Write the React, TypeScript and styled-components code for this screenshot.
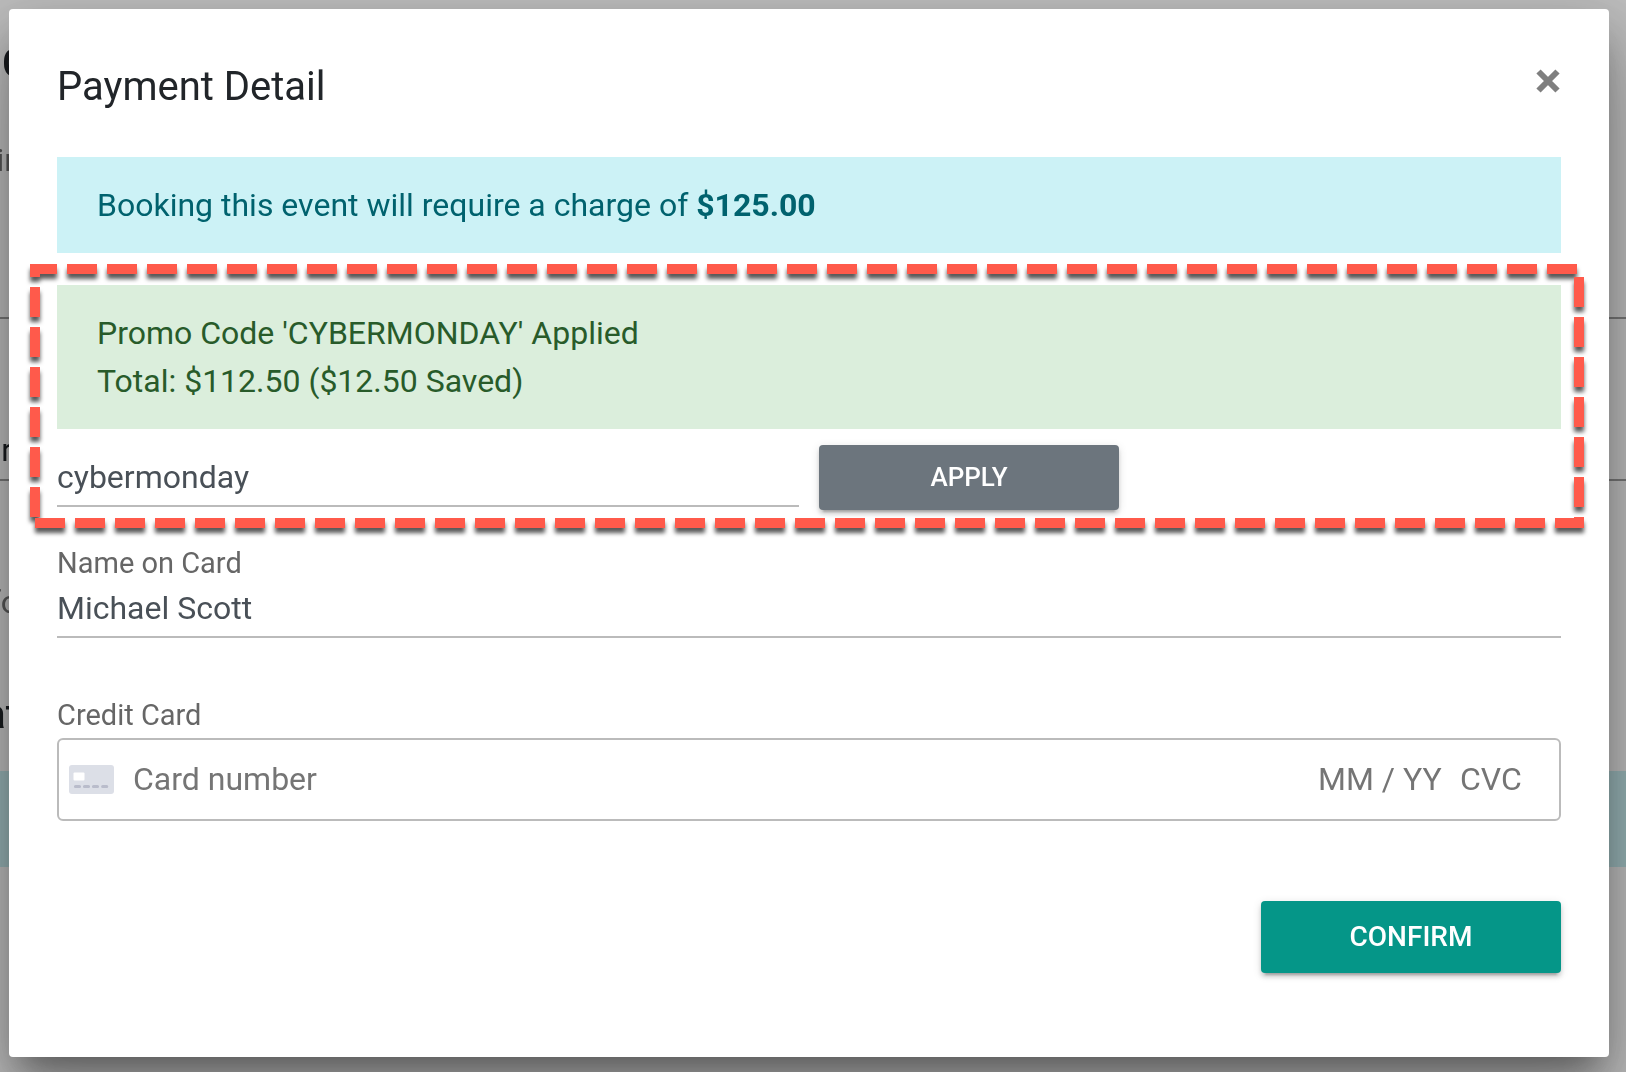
import React from "react";
import styled, { createGlobalStyle } from "styled-components";

const GlobalStyle = createGlobalStyle`
  *, *::before, *::after { box-sizing: border-box; }
  html, body, #root { height: 100%; }
  body {
    margin: 0;
    background: #fff;
    color: #212529;
    font-family: Roboto, "Liberation Sans", sans-serif;
    font-size: 32px;
    line-height: 48px;
  }
  button, input { font: inherit; margin: 0; }
`;

const Screen = styled.div`
  position: relative;
  min-height: 100%;
  overflow: hidden;
`;

const Page = styled.div`
  position: absolute;
  inset: 0;
  padding-top: 40px;
  overflow: hidden;
  will-change: transform;
`;

/* Lines of the page run up to just inside the dialog's left edge. */
const PageLine = styled.div<{ $end: number; $top: number; $tone?: string; $size?: number }>`
  width: ${(p) => p.$end}px;
  margin-top: ${(p) => p.$top}px;
  display: flex;
  justify-content: flex-end;
  white-space: nowrap;
  color: ${(p) => p.$tone ?? "#212529"};
  font-size: ${(p) => p.$size ?? 32}px;
  font-weight: ${(p) => (p.$size ? 500 : 400)};
`;

const PageRule = styled.hr<{ $top: number }>`
  margin: ${(p) => p.$top}px 0 0;
  border: 0;
  height: 2px;
  background: #a0a0a0;
`;

const PageBand = styled.div`
  height: 96px;
  margin-top: 32px;
  background: #ccf2f5;
`;

const Backdrop = styled.div`
  position: absolute;
  inset: 0;
  background: rgba(0, 0, 0, 0.26);
`;

const Dialog = styled.section`
  position: relative;
  margin: 9px 17px 15px 9px;
  padding: 48px 48px 84px;
  background: #fff;
  border-radius: 4px;
  box-shadow: 0 22px 30px -14px rgba(0, 0, 0, 0.34), 0 48px 76px 6px rgba(0, 0, 0, 0.2),
    0 18px 60px 12px rgba(0, 0, 0, 0.16);
`;

const Header = styled.header`
  display: flex;
  justify-content: space-between;
  align-items: flex-start;
  margin-bottom: 40px;
`;

const Title = styled.h1`
  margin: 0;
  font-size: 40px;
  line-height: 60px;
  font-weight: 400;
`;

const CloseButton = styled.button`
  display: flex;
  padding: 12px 1px;
  border: 0;
  background: none;
  cursor: pointer;
`;

const Alert = styled.div<{ $tone: "info" | "success" }>`
  padding: 24px 40px;
  background: ${(p) => (p.$tone === "info" ? "#ccf2f6" : "#dbeedc")};
  color: ${(p) => (p.$tone === "info" ? "#00626e" : "#285b2a")};
  p { margin: 0; }
  strong { font-weight: 700; }
`;

const Promo = styled.section`
  position: relative;
  margin-top: 32px;
`;

/* Dashed call-out; the flip starts the dashes at the bottom left corner. */
const Highlight = styled.div`
  position: absolute;
  inset: -21px -23px -18px -27px;
  pointer-events: none;
  filter: drop-shadow(0 5px 2px rgba(0, 0, 0, 0.65));
  svg {
    display: block;
    width: 100%;
    height: 100%;
    transform: scaleY(-1);
  }
  rect {
    width: calc(100% - 10px);
    height: calc(100% - 10px);
  }
`;

const PromoRow = styled.div`
  display: grid;
  grid-template-columns: minmax(0, 742fr) 300px minmax(0, 422fr);
  column-gap: 20px;
  align-items: start;
  margin-top: 16px;
`;

const LineInput = styled.input`
  display: block;
  width: 100%;
  padding: 0;
  border: 0;
  border-bottom: 2px solid #bbb;
  border-radius: 0;
  outline: 0;
  background: transparent;
  color: #495057;
`;

const PromoInput = styled(LineInput)`
  height: 62px;
  padding-top: 4px;
`;

const NameInput = styled(LineInput)`
  height: 54px;
  padding-bottom: 4px;
`;

const Button = styled.button<{ $fill: string; $size: number; $height: number }>`
  width: 300px;
  height: ${(p) => p.$height}px;
  padding: 0 0 1px;
  border: 0;
  border-radius: 4px;
  background: ${(p) => p.$fill};
  color: #fff;
  font-size: ${(p) => p.$size}px;
  font-weight: 500;
  text-transform: uppercase;
  cursor: pointer;
  box-shadow: 0 4px 4px rgba(0, 0, 0, 0.14), 0 6px 2px -4px rgba(0, 0, 0, 0.2), 0 2px 10px rgba(0, 0, 0, 0.12);
`;

const Field = styled.div<{ $top: number }>`
  margin-top: ${(p) => p.$top}px;
`;

const Label = styled.label`
  display: block;
  font-size: 29px;
  line-height: 42px;
  color: #666;
`;

const CardBox = styled.div`
  display: flex;
  align-items: center;
  height: 83px;
  margin-top: 2px;
  padding: 0 36px 1px 10px;
  border: 2px solid #bbb;
  border-radius: 6px;
`;

const CardInput = styled.input<{ $width?: number }>`
  flex: ${(p) => (p.$width ? "none" : "1 1 0")};
  width: ${(p) => (p.$width ? p.$width + "px" : "auto")};
  min-width: 0;
  padding: 0 0 1px;
  border: 0;
  outline: 0;
  background: transparent;
  color: #495057;
  &::placeholder { color: #757575; opacity: 1; }
`;

const CardIcon = styled.svg`
  flex: none;
  margin-right: 19px;
`;

const Footer = styled.footer`
  display: flex;
  justify-content: flex-end;
  margin-top: 80px;
`;

export default function App() {
  return (
    <>
      <GlobalStyle />
      <Screen>
        <Page aria-hidden="true">
          <PageLine $end={28} $top={0} $size={40}>C</PageLine>
          <PageLine $end={22} $top={48} $tone="#757575">in</PageLine>
          <PageRule $top={133} />
          <PageLine $end={12} $top={107}>r</PageLine>
          <PageRule $top={5} />
          <PageLine $end={19} $top={97} $tone="#757575">fo</PageLine>
          <PageLine $end={19} $top={65} $size={40}>at</PageLine>
          <PageBand />
        </Page>
        <Backdrop />
        <Dialog role="dialog" aria-labelledby="payment-title">
          <Header>
            <Title id="payment-title">Payment Detail</Title>
            <CloseButton type="button" aria-label="Close">
              <svg width="24" height="24" viewBox="0 0 24 24" aria-hidden="true">
                <path d="M2.5 2.5 21.5 21.5M21.5 2.5 2.5 21.5" stroke="#7f7f7f" strokeWidth="6" />
              </svg>
            </CloseButton>
          </Header>
          <Alert $tone="info">
            <p>
              Booking this event will require a charge of <strong>$125.00</strong>
            </p>
          </Alert>
          <Promo>
            <Alert $tone="success" role="status">
              <p>Promo Code 'CYBERMONDAY' Applied</p>
              <p>Total: $112.50 ($12.50 Saved)</p>
            </Alert>
            <PromoRow>
              <PromoInput type="text" aria-label="Promo code" defaultValue="cybermonday" />
              <Button type="button" $fill="#6c757d" $size={26} $height={65}>Apply</Button>
            </PromoRow>
            <Highlight aria-hidden="true">
              <svg>
                <rect x="5" y="5" fill="none" stroke="#ff5a4b" strokeWidth="10" strokeDasharray="30 10" />
              </svg>
            </Highlight>
          </Promo>
          <Field $top={32}>
            <Label htmlFor="card-name">Name on Card</Label>
            <NameInput id="card-name" type="text" defaultValue="Michael Scott" />
          </Field>
          <Field $top={56}>
            <Label htmlFor="card-number">Credit Card</Label>
            <CardBox>
              <CardIcon width="45" height="29" viewBox="0 0 45 29" aria-hidden="true">
                <rect width="45" height="29" rx="3" fill="#dcdfe7" />
                <rect x="4.5" y="7.5" width="11" height="8" rx="1" fill="#fff" />
                <path d="M6.5 21.5h4M15.5 21.5h4M24.5 21.5h4M33.7 21.5h4" stroke="#b9bccb" strokeWidth="3.2" strokeLinecap="round" />
              </CardIcon>
              <CardInput id="card-number" type="text" placeholder="Card number" />
              <CardInput $width={142} type="text" placeholder="MM / YY" aria-label="Expiry date" />
              <CardInput $width={63} type="text" placeholder="CVC" aria-label="CVC" />
            </CardBox>
          </Field>
          <Footer>
            <Button type="submit" $fill="#059688" $size={28} $height={72}>Confirm</Button>
          </Footer>
        </Dialog>
      </Screen>
    </>
  );
}
